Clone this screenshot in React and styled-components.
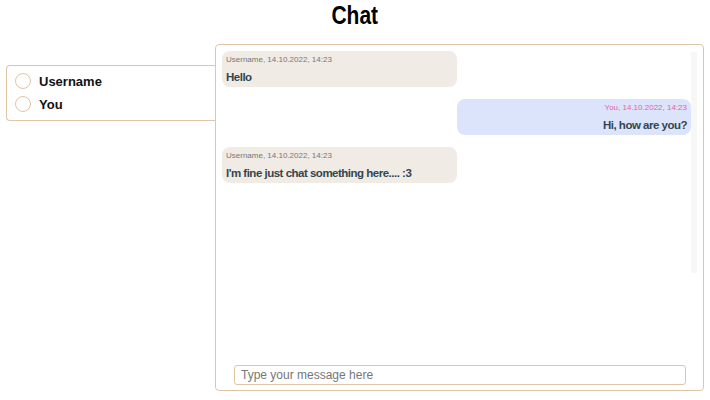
import React from 'react'
import styled, { createGlobalStyle } from 'styled-components'

const GlobalStyle = createGlobalStyle`
  body {
    margin: 0;
    background: #fff;
    font-family: "Liberation Sans", Arial, sans-serif;
  }
`

const users = ['Username', 'You']

const messages = [
  { id: 1, author: 'Username', date: '14.10.2022, 14:23', text: 'Hello', mine: false },
  { id: 2, author: 'You', date: '14.10.2022, 14:23', text: 'Hi, how are you?', mine: true },
  { id: 3, author: 'Username', date: '14.10.2022, 14:23', text: "I'm fine just chat something here.... :3", mine: false },
]

export default function App() {
  return (
    <>
      <GlobalStyle />
      <Page>
        <Header>
          <Title>Chat</Title>
        </Header>
        <Layout>
          <UserList>
            {users.map(u => (
              <UserRow key={u}>
                <Avatar />
                <UserName>{u}</UserName>
              </UserRow>
            ))}
          </UserList>
          <ChatBox>
            <ScrollArea>
              <Messages>
                {messages.map(m => (
                  <Bubble key={m.id} mine={m.mine}>
                    <Meta mine={m.mine}>{m.author}, {m.date}</Meta>
                    <Text>{m.text}</Text>
                  </Bubble>
                ))}
              </Messages>
              <ScrollTrack />
            </ScrollArea>
            <InputRow>
              <MessageInput placeholder="Type your message here" />
            </InputRow>
          </ChatBox>
        </Layout>
      </Page>
    </>
  )
}

const Page = styled.div`
  width: 710px;
  height: 400px;
  display: flex;
  flex-direction: column;
`

const Header = styled.div`
  height: 44px;
  display: flex;
  justify-content: center;
`

const Title = styled.h1`
  margin: 0;
  display: inline-block;
  transform: scaleX(0.84);
  font-family: "Liberation Sans", Arial, sans-serif;
  font-weight: 700;
  font-size: 25px;
  line-height: 30px;
  color: #000;
`

const Layout = styled.div`
  display: flex;
  align-items: flex-start;
  padding-left: 6px;
`

const UserList = styled.ul`
  margin: 21px 0 0;
  padding: 7px 8px 8px;
  width: 209px;
  box-sizing: border-box;
  list-style: none;
  border: 1px solid #dec6a6;
  border-right: none;
  border-radius: 4px 0 0 4px;
  display: flex;
  flex-direction: column;
  gap: 7px;
`

const UserRow = styled.li`
  display: flex;
  align-items: center;
  gap: 8px;
  height: 16px;
`

const Avatar = styled.span`
  width: 16px;
  height: 16px;
  box-sizing: border-box;
  border: 1px solid #dec6a6;
  border-radius: 50%;
`

const UserName = styled.span`
  font-family: "Liberation Sans", Arial, sans-serif;
  font-weight: 700;
  font-size: 13px;
  color: #111;
`

const ChatBox = styled.div`
  width: 489px;
  height: 347px;
  box-sizing: border-box;
  border: 1px solid #dec6a6;
  border-radius: 4px;
  background: #fff;
  display: flex;
  flex-direction: column;
  justify-content: space-between;
  padding: 6px 6px 5px 6px;
`

const ScrollArea = styled.div`
  height: 222px;
  display: flex;
`

const Messages = styled.div`
  flex: 1;
  overflow: hidden;
  display: flex;
  flex-direction: column;
  gap: 12px;
`

const ScrollTrack = styled.div`
  width: 6px;
  margin-top: 1px;
  background: #f7f7f7;
`

const Bubble = styled.div`
  width: 50%;
  box-sizing: border-box;
  align-self: ${p => (p.mine ? 'flex-end' : 'flex-start')};
  text-align: ${p => (p.mine ? 'right' : 'left')};
  background: ${p => (p.mine ? '#dbe4fb' : '#f0ebe5')};
  border-radius: 8px;
  padding: 4px 4px 3px;
`

const Meta = styled.div`
  font-family: "Liberation Sans", Arial, sans-serif;
  font-size: 8px;
  line-height: 10px;
  color: ${p => (p.mine ? '#e85fa5' : '#777')};
`

const Text = styled.div`
  margin-top: 6px;
  font-family: "Liberation Sans", Arial, sans-serif;
  font-weight: 700;
  font-size: 11.5px;
  letter-spacing: -0.5px;
  line-height: 13px;
  color: #33464f;
`

const InputRow = styled.div`
  padding: 0 11px 0 12px;
`

const MessageInput = styled.input`
  width: 100%;
  height: 20px;
  box-sizing: border-box;
  border: 1px solid #dec6a6;
  border-radius: 3px;
  padding: 0 6px;
  font-family: "Liberation Sans", Arial, sans-serif;
  font-size: 12px;
  outline: none;
  &::placeholder {
    color: #777;
  }
`
